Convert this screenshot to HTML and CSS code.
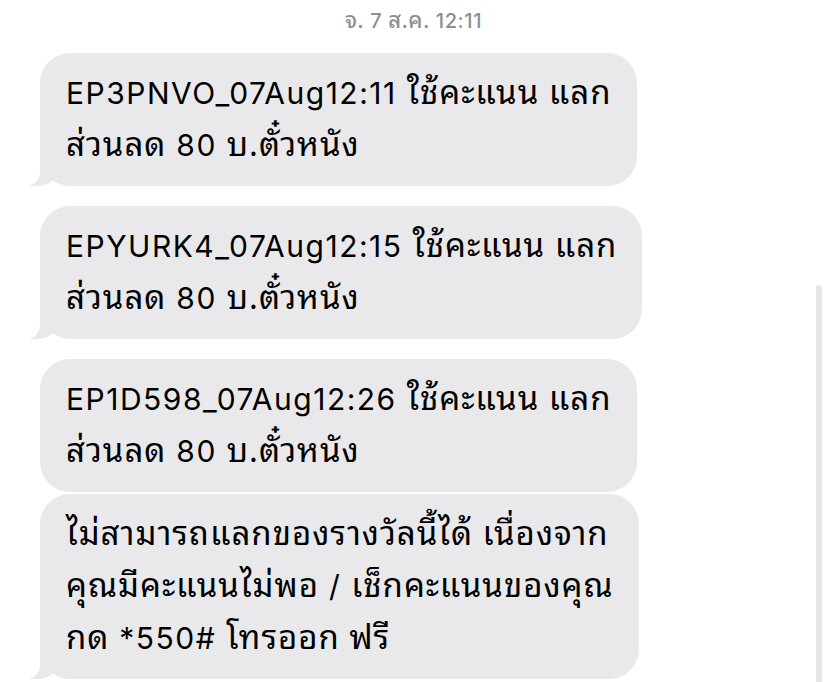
FILE: index.html
```html
<!DOCTYPE html>
<html lang="th">
<head>
  <meta charset="UTF-8">
  <meta name="viewport" content="width=device-width, initial-scale=1.0">
  <title>Messages</title>
  <link rel="stylesheet" href="styles.css">
</head>
<body>
  <div class="thread">
    <div class="stamp"><span class="th">จ.</span> 7 <span class="th">ส.ค.</span> 12:11</div>

    <div class="bubble tail">EP3PNVO_07Aug12:11 <span class="th">ใช้คะแนน แลก<br>ส่วนลด</span> 80 <span class="th">บ.ตั๋วหนัง</span></div>
    <div class="bubble tail">EPYURK4_07Aug12:15 <span class="th">ใช้คะแนน แลก<br>ส่วนลด</span> 80 <span class="th">บ.ตั๋วหนัง</span></div>
    <div class="bubble grouped">EP1D598_07Aug12:26 <span class="th">ใช้คะแนน แลก<br>ส่วนลด</span> 80 <span class="th">บ.ตั๋วหนัง</span></div>
    <div class="bubble tail"><span class="th">ไม่สามารถแลกของรางวัลนี้ได้ เนื่องจาก<br>คุณมีคะแนนไม่พอ</span> / <span class="th">เช็กคะแนนของคุณ<br>กด</span> *550# <span class="th">โทรออก ฟรี</span></div>
  </div>

  <!-- scroll indicator -->
  <div class="scrollbar"></div>
</body>
</html>
```

FILE: styles.css
```css
body {
  margin: 0;
  background: #fff;
  font-family: Inter, "Noto Sans Thai", "Noto Sans", sans-serif;
  overflow: hidden;
  height: 682px;
}
.th {
  font-family: "Noto Sans Thai Looped", "Noto Sans Thai", sans-serif;
  font-size: 1.1em;
  letter-spacing: 0.03em;
  line-height: 1;
}
.thread {
  display: flex;
  flex-direction: column;
  align-items: flex-start;
  padding: 7px 0 0 40px;
}
.stamp {
  align-self: center;
  margin-left: -40px;
  color: #8e8e93;
  font-size: 20px;
  font-weight: 500;
  letter-spacing: 0.6px;
  line-height: 26px;
  height: 26px;
  margin-bottom: 20px;
}
.bubble {
  position: relative;
  background: #e9e9eb;
  color: #000;
  font-size: 30px;
  letter-spacing: 1.5px;
  line-height: 52px;
  padding: 14px 25px 15px 26px;
  border-radius: 30px;
  margin-bottom: 20px;
  white-space: nowrap;
}
.bubble.grouped {
  margin-bottom: 2px;
}
.bubble.tail::before {
  content: "";
  position: absolute;
  bottom: 0;
  left: -10px;
  width: 28px;
  height: 26px;
  background: #e9e9eb;
  border-bottom-right-radius: 20px 18px;
}
.bubble.tail::after {
  content: "";
  position: absolute;
  bottom: 0;
  left: -34px;
  width: 34px;
  height: 26px;
  background: #fff;
  border-bottom-right-radius: 14px;
}
.scrollbar {
  position: absolute;
  top: 285px;
  right: 5px;
  bottom: 0;
  width: 6px;
  background: #e6e6e6;
  border-radius: 3px 3px 0 0;
}
```
